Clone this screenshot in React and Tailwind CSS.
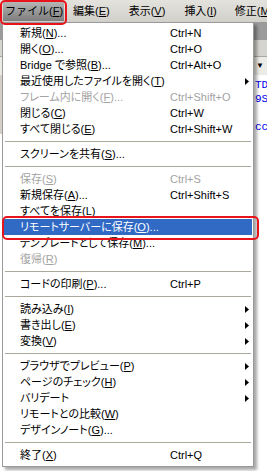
const items = [
  { label: "新規", k: "N", dots: true, sc: "Ctrl+N" },
  { label: "開く", k: "O", dots: true, sc: "Ctrl+O" },
  { label: "Bridge で参照", k: "B", dots: true, sc: "Ctrl+Alt+O" },
  { label: "最近使用したファイルを開く", k: "T", sub: true },
  { label: "フレーム内に開く", k: "F", dots: true, sc: "Ctrl+Shift+O", off: true },
  { label: "閉じる", k: "C", sc: "Ctrl+W" },
  { label: "すべて閉じる", k: "E", sc: "Ctrl+Shift+W" },
  "sep",
  { label: "スクリーンを共有", k: "S", dots: true },
  "sep",
  { label: "保存", k: "S", sc: "Ctrl+S", off: true },
  { label: "新規保存", k: "A", dots: true, sc: "Ctrl+Shift+S" },
  { label: "すべてを保存", k: "L" },
  { label: "リモートサーバーに保存", k: "O", dots: true, active: true },
  { label: "テンプレートとして保存", k: "M", dots: true },
  { label: "復帰", k: "R", off: true },
  "sep",
  { label: "コードの印刷", k: "P", dots: true, sc: "Ctrl+P" },
  "sep",
  { label: "読み込み", k: "I", sub: true },
  { label: "書き出し", k: "E", sub: true },
  { label: "変換", k: "V", sub: true },
  "sep",
  { label: "ブラウザでプレビュー", k: "P", sub: true },
  { label: "ページのチェック", k: "H", sub: true },
  { label: "バリデート", sub: true },
  { label: "リモートとの比較", k: "W" },
  { label: "デザインノート", k: "G", dots: true },
  "sep",
  { label: "終了", k: "X", sc: "Ctrl+Q" },
];

const font = "font-['Liberation_Sans','Noto_Sans_CJK_JP',sans-serif]";

const Key = ({ k }) => (
  <span>
    (<span className="underline underline-offset-[1px]">{k}</span>)
  </span>
);

const Arrow = () => (
  <svg width="4" height="7" viewBox="0 0 4 7" className="shrink-0">
    <path d="M0 0 L4 3.5 L0 7 Z" fill="currentColor" />
  </svg>
);

const Row = ({ it }) => {
  const color = it.active
    ? "bg-[#316ac5] text-white"
    : it.off
    ? "text-[#a3a3a3]"
    : "text-black";
  return (
    <div className={`mx-[1px] flex h-[16px] items-center pl-[16px] pr-[3px] ${color}`}>
      <div className="w-[150px] shrink-0 whitespace-nowrap [font-feature-settings:'palt']">
        {it.label}
        {it.k && <Key k={it.k} />}
        {it.dots && "..."}
      </div>
      <div className="flex-1 whitespace-nowrap">{it.sc}</div>
      {it.sub && <Arrow />}
    </div>
  );
};

const MenuBar = () => (
  <div className="flex h-[22px] items-center whitespace-nowrap bg-gradient-to-b from-[#e4e2dd] to-[#d2d0ca] text-black">
    <div className="ml-[3px] flex h-[20px] w-[61px] shrink-0 items-center bg-gradient-to-b from-[#b9b9b9] via-[#9a9a9a] to-[#7e7e7e] pl-[2px]">
      ファイル<Key k="F" />
    </div>
    <div className="ml-[9px]">
      編集<Key k="E" />
    </div>
    <div className="ml-[19px]">
      表示<Key k="V" />
    </div>
    <div className="ml-[19px]">
      挿入<Key k="I" />
    </div>
    <div className="ml-[18px]">
      修正<Key k="M" />
    </div>
  </div>
);

export default function App() {
  return (
    <div className={`relative h-[471px] w-[267px] overflow-hidden bg-white text-[11px] leading-none ${font}`}>
      <MenuBar />

      {/* app behind the menu */}
      <div className="h-[18px] bg-[#9b9b9b]" />
      <div className="h-[17px] border-b border-[#a8a8a8] bg-[#d6d4ce]" />
      <div className="flex h-[18px] items-center justify-end bg-[#ecebe6] pr-[3px]">
        <span className="text-[8px] text-black">▼</span>
      </div>
      <div className="border-l-2 border-[#d4d0c8] pl-[253px] pt-[3px] font-['Liberation_Mono',monospace] text-[11px] leading-[14px] text-[#0000ee]">
        <div>TD</div>
        <div>9S</div>
        <div>&nbsp;</div>
        <div>cc</div>
      </div>

      {/* File menu */}
      <div className="absolute left-[2px] top-[22px] w-[252px] border border-[#9a9a9a] bg-white pb-[3px] pt-[2px] shadow-[3px_3px_3px_rgba(0,0,0,0.35)]">
        {items.map((it, i) =>
          it === "sep" ? (
            <div key={i} className="flex h-[9px] items-center px-[2px]">
              <div className="h-px w-full bg-[#aca899]" />
            </div>
          ) : (
            <Row key={i} it={it} />
          )
        )}
      </div>

      {/* red annotation boxes */}
      <div className="absolute left-0 top-0 h-[25px] w-[67px] rounded-[5px] border-2 border-[#e8141b]" />
      <div className="absolute left-[2px] top-[216px] h-[24px] w-[257px] rounded-[5px] border-2 border-[#e8141b]" />
    </div>
  );
}
